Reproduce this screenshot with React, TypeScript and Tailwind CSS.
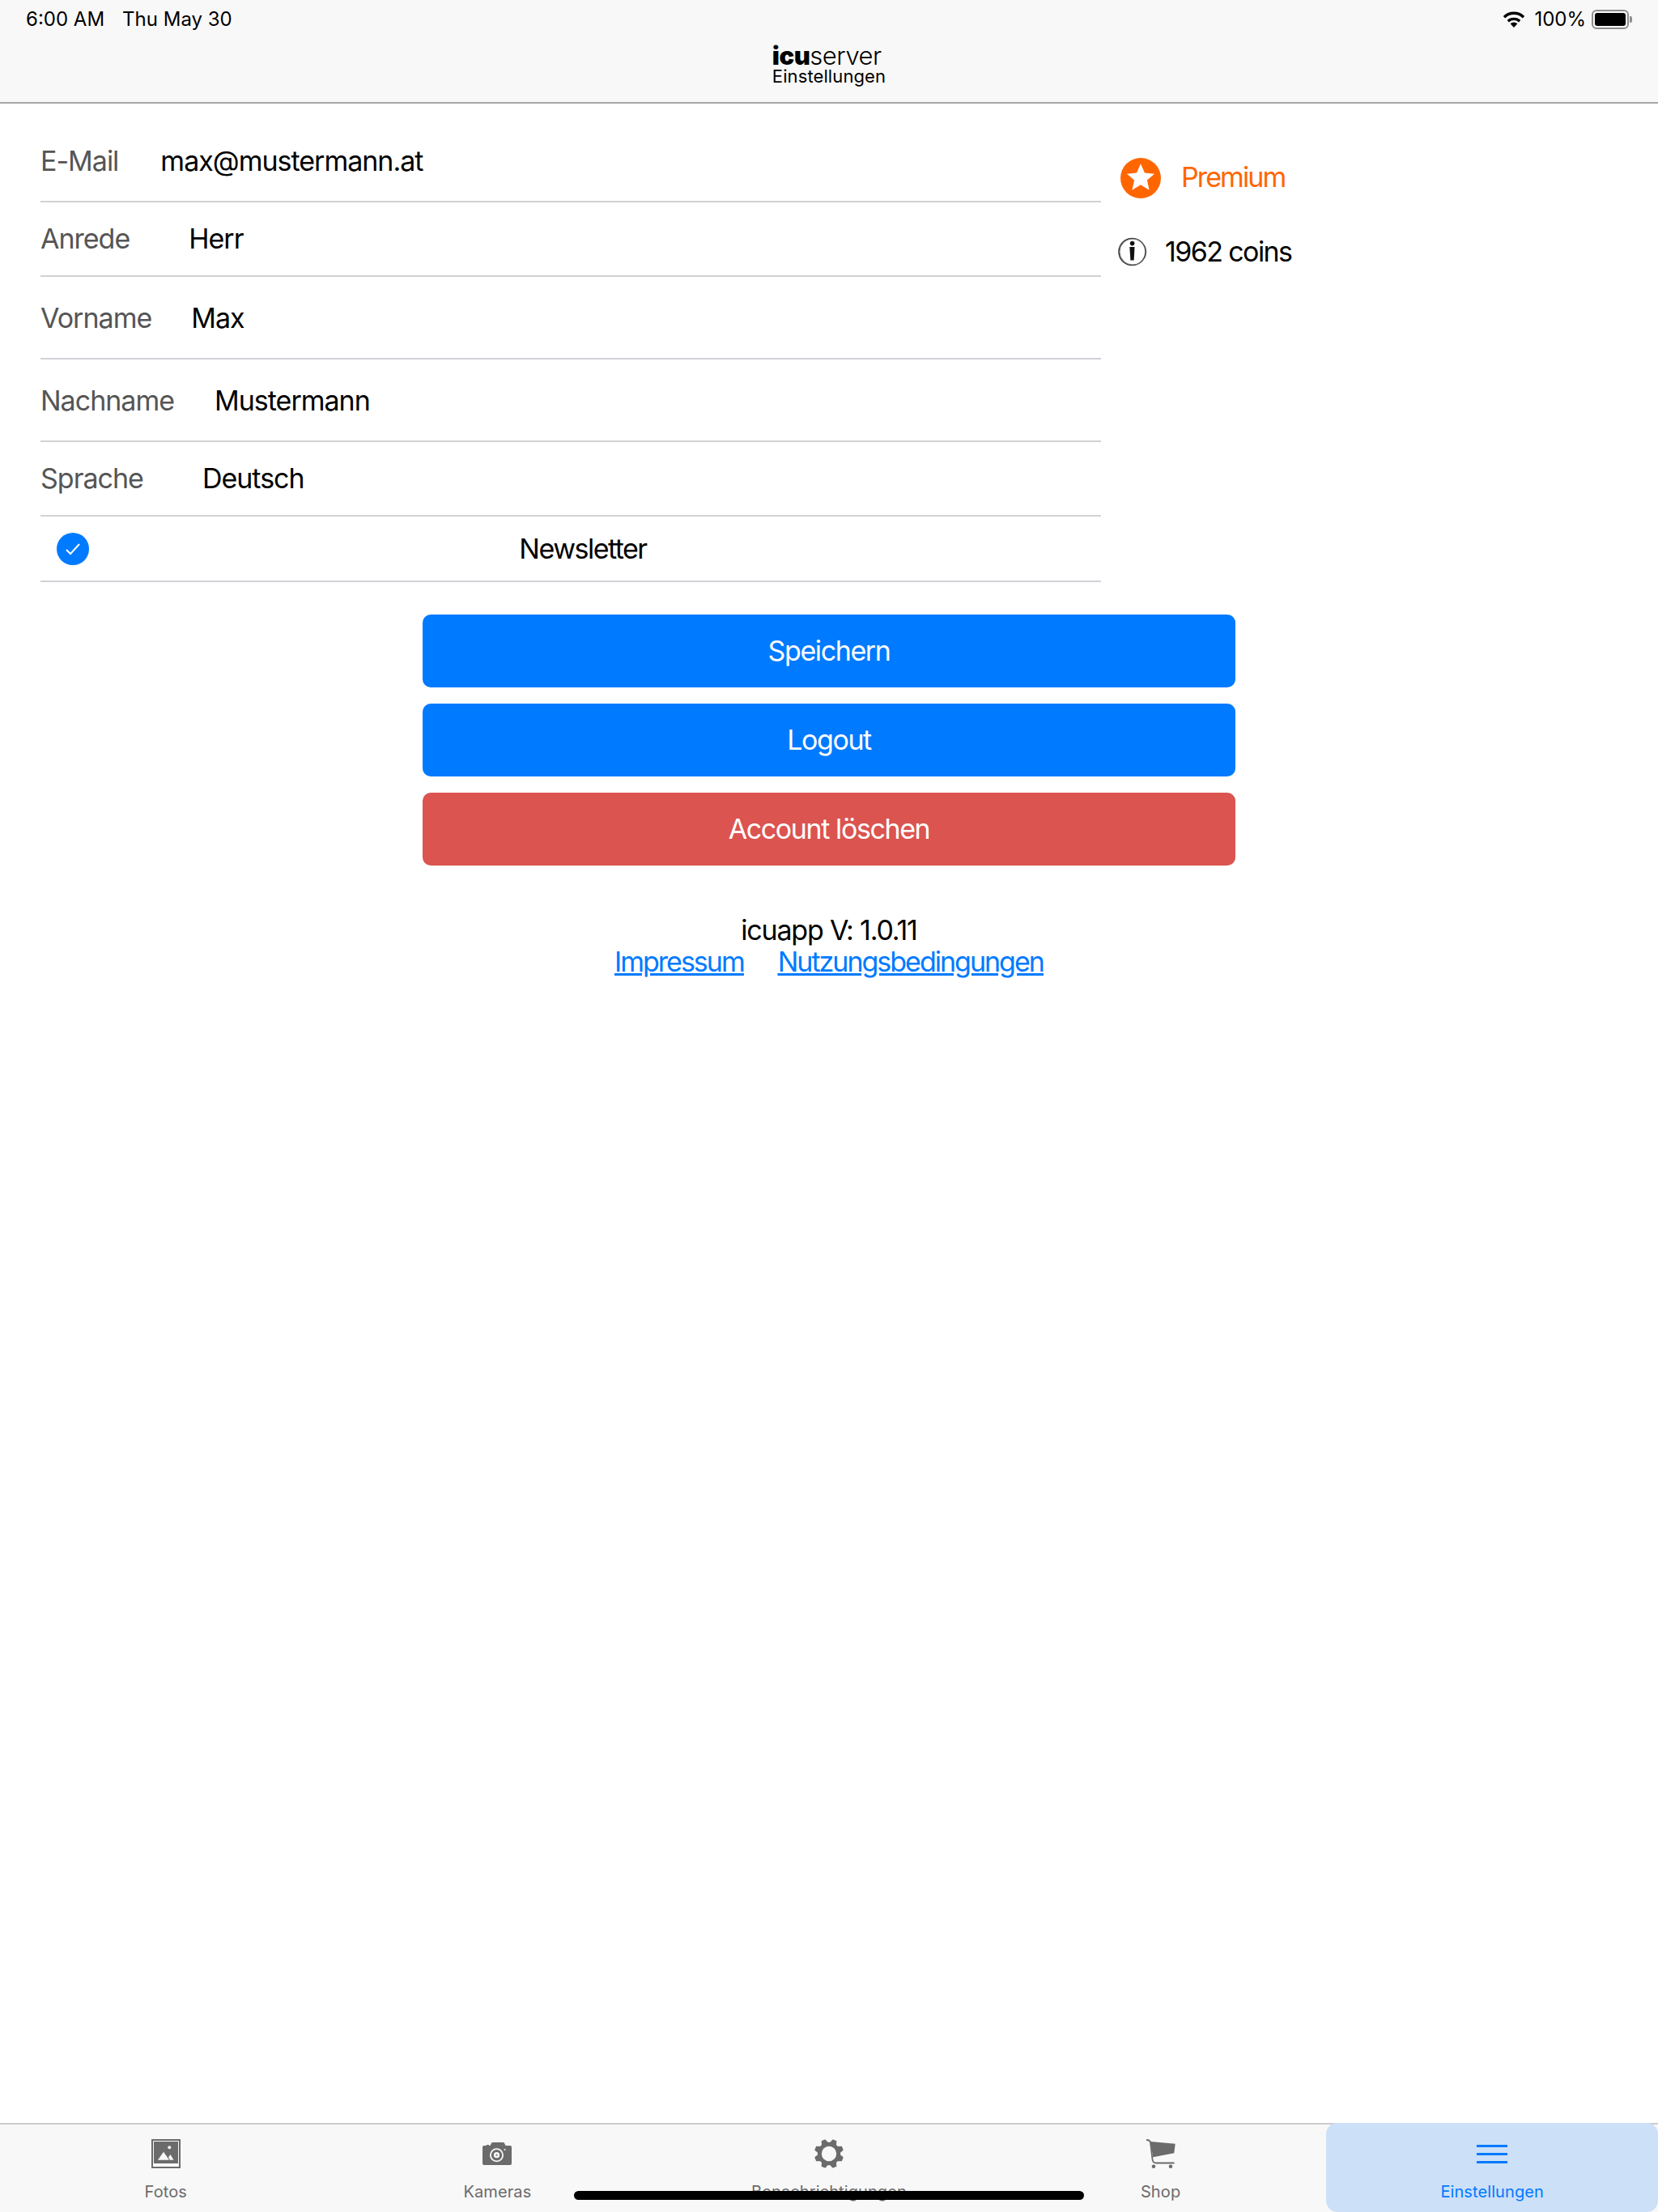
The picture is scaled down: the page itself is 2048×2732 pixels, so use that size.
import React from "react";

const font = "font-['Inter','Liberation_Sans',sans-serif]";

type Field = { label: string; value: string; rowClass: string };

const fields: Field[] = [
  { label: "E-Mail", value: "max@mustermann.at", rowClass: "h-[99px] gap-[52px] pb-[2px]" },
  { label: "Anrede", value: "Herr", rowClass: "h-[92px] gap-[73px] pb-[2px]" },
  { label: "Vorname", value: "Max", rowClass: "h-[102px] gap-[49px]" },
  { label: "Nachname", value: "Mustermann", rowClass: "h-[102px] gap-[50px]" },
  { label: "Sprache", value: "Deutsch", rowClass: "h-[92px] gap-[73px] pb-[2px]" },
];

// 8 teeth, offset by half a step so two of them sit on top
const gearPath = () => {
  const pts: string[] = [];
  for (let i = 0; i < 8; i++) {
    const a = ((i * 45 + 22.5) * Math.PI) / 180;
    const at = (r: number, d: number) => {
      const x = 18 + r * Math.cos(a + (d * Math.PI) / 180);
      const y = 18 + r * Math.sin(a + (d * Math.PI) / 180);
      return `${x.toFixed(2)} ${y.toFixed(2)}`;
    };
    pts.push(at(13.5, -15), at(17.5, -7), at(17.5, 7), at(13.5, 15));
  }
  return `M${pts.join(" L")} Z`;
};

const FotosIcon = () => (
  <svg width="36" height="36" viewBox="0 0 36 36">
    <rect x="1" y="1" width="34" height="34" fill="none" stroke="#6b6b6b" strokeWidth="2" />
    <rect x="3" y="3" width="30" height="27" fill="#6b6b6b" />
    <circle cx="22.3" cy="10.3" r="2" fill="#f8f8f8" />
    <path d="M8 25.7 L15 15.7 L22 25.7 Z" fill="#f8f8f8" />
    <path d="M21 22.5 L23.5 19 L27.5 25.7 L23 25.7 Z" fill="#f8f8f8" />
  </svg>
);

const KamerasIcon = () => (
  <svg width="36" height="28" viewBox="0 0 36 28">
    <path
      d="M2 4 H5 V3 H8 V4 H9.5 L11 1 Q11.5 0 12.5 0 H25.5 Q26.5 0 27 1 L28.5 4 H34 A2 2 0 0 1 36 6 V26 A2 2 0 0 1 34 28 H2 A2 2 0 0 1 0 26 V6 A2 2 0 0 1 2 4 Z"
      fill="#6b6b6b"
    />
    <circle cx="17.5" cy="15.7" r="7.6" fill="none" stroke="#f8f8f8" strokeWidth="1.8" />
    <circle cx="17.5" cy="15.7" r="3.6" fill="#f8f8f8" />
    <circle cx="17.5" cy="15.7" r="1.2" fill="#8a8a8a" />
    <circle cx="27.5" cy="9" r="1" fill="#f8f8f8" />
  </svg>
);

const GearIcon = () => (
  <svg width="36" height="36" viewBox="0 0 36 36">
    <path d={gearPath()} fill="#6b6b6b" stroke="#6b6b6b" strokeWidth="1.5" strokeLinejoin="round" />
    <circle cx="18" cy="18" r="9.2" fill="#f8f8f8" />
  </svg>
);

const CartIcon = () => (
  <svg width="36" height="36" viewBox="0 0 36 36">
    <path
      d="M0 1 Q4.5 1 5 4 L7.5 25 Q8 29.5 12 29.5 H34.5"
      fill="none"
      stroke="#6b6b6b"
      strokeWidth="1.8"
    />
    <path d="M5 3 L35.7 5.7 L34.3 17.3 L8.3 22.3 Z" fill="#6b6b6b" />
    <circle cx="9" cy="33.7" r="2.3" fill="#6b6b6b" />
    <circle cx="30" cy="33.7" r="2.3" fill="#6b6b6b" />
  </svg>
);

const MenuIcon = () => (
  <div className="flex h-[36px] w-[38px] flex-col justify-center gap-[7px]">
    <div className="h-[3px] bg-[#007aff]" />
    <div className="h-[3px] bg-[#007aff]" />
    <div className="h-[3px] bg-[#007aff]" />
  </div>
);

const tabs = [
  { label: "Fotos", icon: <FotosIcon /> },
  { label: "Kameras", icon: <KamerasIcon /> },
  { label: "Benachrichtigungen", icon: <GearIcon /> },
  { label: "Shop", icon: <CartIcon /> },
  { label: "Einstellungen", icon: <MenuIcon />, active: true },
];

export default function App() {
  return (
    <div className={`relative flex h-[2732px] w-[2048px] flex-col overflow-hidden bg-white text-black ${font}`}>
      {/* status bar + title */}
      <header className="relative h-[128px] shrink-0 border-b-2 border-[#a7a7aa] bg-[#f8f8f8]">
        <div className="flex h-[48px] items-center justify-between pl-[32px] pr-[32px] text-[24px]">
          <div className="flex gap-[22px]">
            <span>6:00 AM</span>
            <span>Thu May 30</span>
          </div>
          <div className="flex items-center">
            <svg width="28" height="20" viewBox="0 0 28 20" className="mr-[11px]">
              <path d="M14 20 L9.6 15.2 A6.5 6.5 0 0 1 18.4 15.2 Z" fill="#000" />
              <path d="M6.8 12.2 A10.5 10.5 0 0 1 21.2 12.2" fill="none" stroke="#000" strokeWidth="3.4" />
              <path d="M2 7.2 A17 17 0 0 1 26 7.2" fill="none" stroke="#000" strokeWidth="3.4" />
            </svg>
            <span className="mr-[7px]">100%</span>
            <div className="flex items-center">
              <div className="flex h-[24px] w-[46px] rounded-[6px] border-2 border-[#8e8e8e] p-[2px]">
                <div className="flex-1 rounded-[3px] bg-black" />
              </div>
              <div className="ml-[1px] h-[8px] w-[3px] rounded-r-[2px] bg-[#8e8e8e]" />
            </div>
          </div>
        </div>
        <div className="mt-[7px] flex justify-center">
          <div className="flex flex-col items-start">
            <div className="text-[31px] leading-[28px] tracking-[-0.5px]">
              <span className="font-black">icu</span>
              <span className="font-light">server</span>
            </div>
            <div className="text-[22px] leading-[22px] tracking-[0.1px]">Einstellungen</div>
          </div>
        </div>
      </header>

      {/* form + account info */}
      <main className="flex flex-col">
        <div className="flex">
          <div className="ml-[50px] mt-[23px] w-[1310px]">
            {fields.map((f) => (
              <div
                key={f.label}
                className={`flex items-center border-b-2 border-[#d1d1d6] text-[34px] tracking-[-1px] ${f.rowClass}`}
              >
                <span className="text-[#555555]">{f.label}</span>
                <span>{f.value}</span>
              </div>
            ))}
            <div className="relative flex h-[81px] items-center justify-center border-b-2 border-[#d1d1d6] text-[34px] tracking-[-1.5px]">
              <div className="absolute left-[20px] flex h-[40px] w-[40px] items-center justify-center rounded-full bg-[#007aff]">
                <svg width="22" height="18" viewBox="0 0 22 18">
                  <path d="M3 10 L8 15 L19 3" fill="none" stroke="#fff" strokeWidth="2" />
                </svg>
              </div>
              <span className="ml-[30px]">Newsletter</span>
            </div>
          </div>
          <div className="ml-[24px] mt-[65px] flex flex-col">
            <div className="flex items-center gap-[25px]">
              <div className="flex h-[50px] w-[50px] items-center justify-center rounded-full bg-[#ff6600]">
                <svg width="34" height="33" viewBox="0 0 24 23" className="-mt-[2px]">
                  <path d="M12 0 L15.5 8 L24 8.8 L17.6 14.4 L19.5 23 L12 18.4 L4.5 23 L6.4 14.4 L0 8.8 L8.5 8 Z" fill="#fff" />
                </svg>
              </div>
              <span className="pb-[2px] text-[34px] tracking-[-1.9px] text-[#ff6600]">Premium</span>
            </div>
            <div className="mt-[39px] -ml-[3px] flex items-center gap-[22px]">
              <svg width="36" height="36" viewBox="0 0 36 36">
                <circle cx="17.5" cy="18" r="16.5" fill="none" stroke="#333" strokeWidth="1.5" />
                <ellipse cx="18.5" cy="18" rx="16.5" ry="16" fill="none" stroke="#777" strokeWidth="1" />
                <circle cx="17.6" cy="7.6" r="2.8" fill="#111" />
                <path d="M14.3 12 H20.5 L20 22 L19.6 28.5 H15.4 L15 22 Z" fill="#111" />
              </svg>
              <span className="text-[34px] tracking-[-1.6px]">1962 coins</span>
            </div>
          </div>
        </div>

        <div className="mx-auto mt-[40px] flex w-[1004px] flex-col gap-[20px] text-[34px] tracking-[-1.4px] text-white">
          <button className="h-[90px] rounded-[10px] bg-[#007aff] pb-[2px]">Speichern</button>
          <button className="h-[90px] rounded-[10px] bg-[#007aff] pb-[2px]">Logout</button>
          <button className="h-[90px] rounded-[10px] bg-[#db5450] pb-[2px]">Account löschen</button>
        </div>

        <div className="mt-[60px] flex flex-col items-center text-[34px] leading-[39px]">
          <span className="tracking-[-1.2px]">icuapp V: 1.0.11</span>
          <div className="flex gap-[42px] tracking-[-2px] text-[#007aff] underline">
            <a>Impressum</a>
            <a>Nutzungsbedingungen</a>
          </div>
        </div>
      </main>

      {/* tab bar */}
      <nav className="mt-auto grid h-[110px] shrink-0 grid-cols-5 border-t-2 border-[#cccccc] bg-[#f8f8f8]">
        {tabs.map((t) => (
          <div
            key={t.label}
            className={`flex flex-col items-center pt-[17px] text-[20px] tracking-[0.1px] ${
              t.active ? "-mt-[2px] rounded-[14px] bg-[#cce0f8] pt-[19px] text-[#007aff]" : "text-[#6b6b6b]"
            }`}
          >
            <div className="flex h-[38px] items-center">{t.icon}</div>
            <span className="mt-[13px]">{t.label}</span>
          </div>
        ))}
      </nav>

      {/* home indicator */}
      <div className="absolute bottom-[15px] left-[709px] h-[11px] w-[630px] rounded-full bg-black" />
    </div>
  );
}
